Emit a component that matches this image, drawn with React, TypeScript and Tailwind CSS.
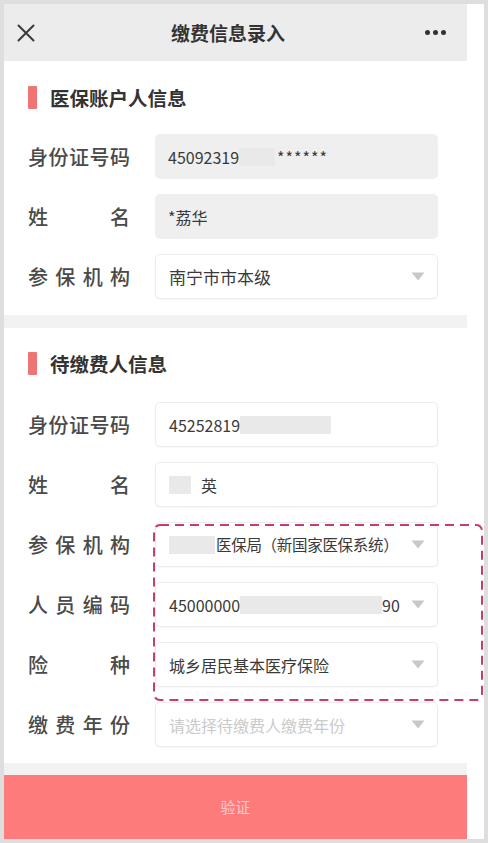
import React from "react";

const FONT = '"Noto Sans CJK SC", "Noto Sans", sans-serif';

function Label({ text }: { text: string }) {
  return (
    <div className="w-[102px] flex justify-between text-[20px] leading-none text-[#4a4a4a] font-medium">
      {text.split("").map((c, i) => (
        <span key={i}>{c}</span>
      ))}
    </div>
  );
}

function Arrow() {
  return (
    <svg width="14" height="9" viewBox="0 0 14 9" className="ml-auto mr-[12px] shrink-0">
      <polygon points="0.5,0.5 13.5,0.5 7,8.5" fill="#c8c8c8" />
    </svg>
  );
}

function Blur({ w }: { w: number }) {
  return <span className="inline-block h-[18px] bg-[#e9e9e9]" style={{ width: w }} />;
}

function Field({
  label,
  disabled,
  select,
  children,
}: {
  label: string;
  disabled?: boolean;
  select?: boolean;
  children: React.ReactNode;
}) {
  return (
    <div className="flex items-center h-[45px]">
      <Label text={label} />
      <div
        className={
          "ml-[25px] w-[283px] h-[45px] rounded-[5px] flex items-center pl-[13px] text-[16px] text-[#3a3a3a] " +
          (disabled
            ? "bg-[#efefef]"
            : "bg-white border border-[#ececec] shadow-[0_1px_2px_rgba(0,0,0,0.04)]")
        }
      >
        <div className="flex items-center">{children}</div>
        {select && <Arrow />}
      </div>
    </div>
  );
}

function Title({ text }: { text: string }) {
  return (
    <div className="flex items-center h-[23px]">
      <div className="w-[9px] h-[23px] bg-[#ef7474] rounded-[1px]" />
      <div className="ml-[13px] text-[19.5px] font-bold text-[#333] leading-none">{text}</div>
    </div>
  );
}

export default function App() {
  return (
    <div
      className="relative w-[488px] h-[843px] bg-white border-[4px] border-[#dedede] overflow-hidden"
      style={{ fontFamily: FONT }}
    >
      <div className="w-[463px] h-full flex flex-col">
        {/* header */}
        <div className="h-[57px] bg-[#ececec] flex items-center relative shrink-0">
          <svg width="18" height="18" viewBox="0 0 18 18" className="ml-[13px]">
            <path d="M1.5 1.5 L16.5 16.5 M16.5 1.5 L1.5 16.5" stroke="#3a3a3a" strokeWidth="2" strokeLinecap="round" />
          </svg>
          <div className="flex-1 text-center text-[19px] font-semibold text-[#333] leading-none pr-[4px]">
            缴费信息录入
          </div>
          <div className="flex gap-[3px] mr-[21px]">
            <span className="w-[5px] h-[5px] rounded-full bg-[#333]" />
            <span className="w-[5px] h-[5px] rounded-full bg-[#333]" />
            <span className="w-[5px] h-[5px] rounded-full bg-[#333]" />
          </div>
        </div>

        {/* section 1 */}
        <div className="pt-[25px] pb-[16px] pl-[24px] shrink-0">
          <Title text="医保账户人信息" />
          <div className="mt-[25px] flex flex-col gap-[15px]">
            <Field label="身份证号码" disabled>
              <span>45092319</span>
              <Blur w={36} />
              <span className="ml-[2px] tracking-[1px]">******</span>
            </Field>
            <Field label="姓名" disabled>
              <span>*荔华</span>
            </Field>
            <Field label="参保机构" select>
              <span className="text-[17px]">南宁市市本级</span>
            </Field>
          </div>
        </div>

        <div className="h-[13px] bg-[#f2f2f2] shrink-0" />

        {/* section 2 */}
        <div className="pt-[24px] pb-[16px] pl-[24px] shrink-0">
          <Title text="待缴费人信息" />
          <div className="mt-[27px] flex flex-col gap-[15px]">
            <Field label="身份证号码">
              <span>45252819</span>
              <Blur w={91} />
            </Field>
            <Field label="姓名">
              <Blur w={22} />
              <span className="ml-[10px]">英</span>
            </Field>
            <Field label="参保机构" select>
              <Blur w={46} />
              <span className="ml-[1px] text-[15.5px] tracking-[-0.3px]">医保局（新国家医保系统）</span>
            </Field>
            <Field label="人员编码" select>
              <span>45000000</span>
              <Blur w={142} />
              <span>90</span>
            </Field>
            <Field label="险种" select>
              <span>城乡居民基本医疗保险</span>
            </Field>
            <Field label="缴费年份" select>
              <span className="text-[#cacaca]">请选择待缴费人缴费年份</span>
            </Field>
          </div>
        </div>

        <div className="h-[12px] bg-[#f2f2f2] shrink-0" />

        <div className="flex-1 bg-[#fe7b7b] flex items-center justify-center text-[15px] text-[#ffcaca]">
          验证
        </div>
      </div>

      {/* dashed annotation */}
      <svg
        className="absolute left-[149px] top-[520px]"
        width="330"
        height="177"
        viewBox="0 0 330 177"
      >
        <rect
          x="1"
          y="1"
          width="328"
          height="175"
          rx="6"
          fill="none"
          stroke="#c63d68"
          strokeWidth="2"
          strokeDasharray="9 6"
        />
      </svg>
    </div>
  );
}
